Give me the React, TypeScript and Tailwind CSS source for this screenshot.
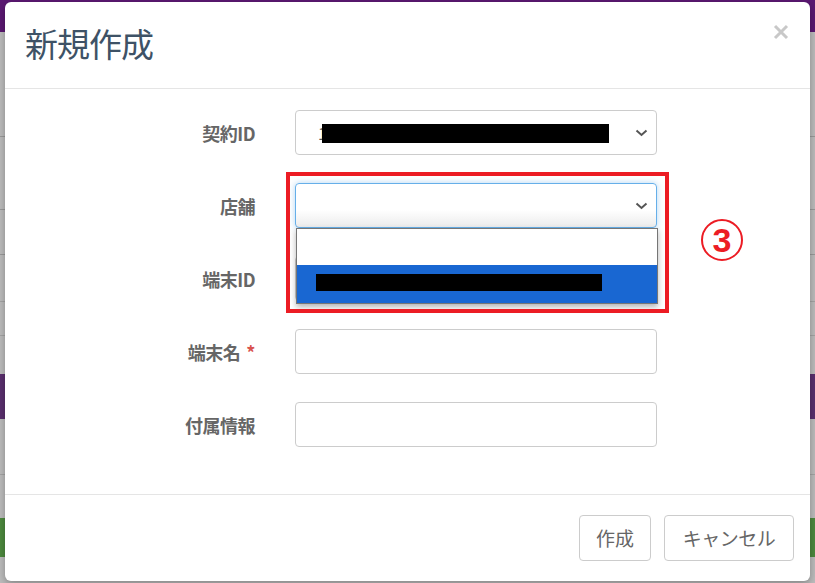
import React from "react";

const font = { fontFamily: '"Noto Sans CJK JP", "Noto Sans", sans-serif' };

const Chevron: React.FC = () => (
  <svg width="13" height="8" viewBox="0 0 13 8" className="absolute right-[8px] top-1/2 -translate-y-1/2">
    <path d="M1.5 1.5 L6.5 6 L11.5 1.5" fill="none" stroke="#555" strokeWidth="2" />
  </svg>
);

const Label: React.FC<{ text: string; required?: boolean }> = ({ text, required }) => (
  <div className="w-[250px] text-right text-[18px] font-bold text-[#666] leading-none tracking-[-0.5px]">
    {text}
    {required && <span className="ml-[6px] text-[#d9534f]">*</span>}
  </div>
);

const Row: React.FC<{ children: React.ReactNode }> = ({ children }) => (
  <div className="flex items-center gap-[40px]">{children}</div>
);

const TextInput: React.FC = () => (
  <div className="w-[362px] h-[45px] border border-[#ccc] rounded-[4px] bg-white" />
);

export default function App() {
  return (
    <div className="relative w-[815px] h-[583px] overflow-hidden bg-[#bdbdbd]" style={font}>
      {/* dimmed page behind the modal */}
      <div className="flex flex-col">
        <div className="h-[32px] bg-[#5b1872]" />
        <div className="h-[105px] border-b border-[#9a9a9a]" />
        <div className="h-[73px] border-b border-[#9a9a9a]" />
        <div className="h-[45px] border-b border-[#9a9a9a]" />
        <div className="h-[47px] border-b border-[#a5a5a5]" />
        <div className="h-[34px] border-b border-[#a5a5a5]" />
        <div className="h-[38px]" />
        <div className="h-[45px] bg-[#5a2f6e]" />
        <div className="h-[56px] border-b border-[#a5a5a5]" />
        <div className="h-[43px]" />
        <div className="h-[39px] bg-[#4d8a3e]" />
      </div>

      {/* modal */}
      <div className="absolute left-[5px] top-[2px] w-[805px] h-[579px] bg-white rounded-[6px] shadow-[0_3px_9px_rgba(0,0,0,0.3)] flex flex-col">
        <div className="relative h-[87px] border-b border-[#e5e5e5] flex items-center pl-[20px] pb-[4px] shrink-0">
          <h4 className="text-[33px] leading-none text-[#3e5266] font-normal tracking-[-1px]">新規作成</h4>
          <svg width="16" height="16" viewBox="0 0 16 16" className="absolute left-[768px] top-[22px]">
            <path d="M2 2 L14 14 M14 2 L2 14" stroke="#c8c8c8" strokeWidth="3" />
          </svg>
        </div>

        <div className="flex flex-col gap-[28px] pt-[21px] pb-[47px] shrink-0">
          <Row>
            <Label text="契約ID" />
            <div className="relative w-[362px] h-[45px] border border-[#ccc] rounded-[4px] bg-white flex items-center pl-[22px]">
              <span className="text-[16px] text-[#555]">1</span>
              <div className="absolute left-[26px] top-[13px] w-[287px] h-[19px] bg-black" />
              <Chevron />
            </div>
          </Row>

          <Row>
            <Label text="店舗" />
            <div className="relative w-[362px] h-[45px]">
              <div className="relative w-full h-full border border-[#66afe9] rounded-[4px] bg-gradient-to-b from-white from-60% to-[#ececec] shadow-[0_0_6px_rgba(102,175,233,0.5)]">
                <Chevron />
              </div>
              <div className="absolute left-[1px] top-[45px] w-[362px] border border-[#767676] bg-white shadow-[0_3px_6px_rgba(0,0,0,0.3)] z-10">
                <div className="h-[36px] bg-white" />
                <div className="relative h-[38px] bg-[#1967d2]">
                  <div className="absolute left-[19px] top-[9px] w-[286px] h-[17px] bg-black" />
                </div>
              </div>
              <div className="absolute left-[-9px] top-[-11px] w-[383px] h-[141px] border-4 border-[#ec1c24] pointer-events-none z-20" />
              <div className="absolute left-[406px] top-[36px] w-[42px] h-[42px] rounded-full border-2 border-[#ec1c24] flex items-center justify-center">
                <span className="text-[34px] font-bold text-[#ec1c24] leading-none" style={{ fontFamily: '"Liberation Sans", sans-serif' }}>3</span>
              </div>
            </div>
          </Row>

          <Row>
            <Label text="端末ID" />
            <TextInput />
          </Row>

          <Row>
            <Label text="端末名" required />
            <TextInput />
          </Row>

          <Row>
            <Label text="付属情報" />
            <TextInput />
          </Row>
        </div>

        <div className="border-t border-[#e5e5e5] flex justify-end gap-[13px] pt-[20px] pr-[16px]">
          <button className="w-[72px] h-[46px] border border-[#ccc] rounded-[4px] bg-white text-[19px] text-[#666]">作成</button>
          <button className="w-[130px] h-[46px] border border-[#ccc] rounded-[4px] bg-white text-[19px] text-[#666] tracking-[-0.5px]">キャンセル</button>
        </div>
      </div>
    </div>
  );
}
